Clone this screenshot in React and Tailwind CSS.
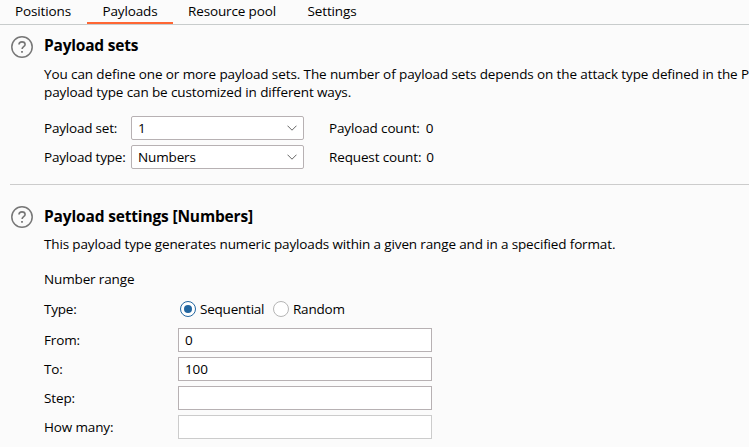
import React from "react";

function HelpIcon() {
  return (
    <svg className="mt-px h-[22px] w-[22px] shrink-0" viewBox="0 0 22 22" fill="none" stroke="#777777">
      <circle cx="11" cy="11" r="10.2" strokeWidth="1.5" />
      <path d="M8 8.6C8 7 9.3 5.9 11 5.9s3.1 1 3.1 2.6c0 2.1-3 2.3-3 4.5" strokeWidth="1.6" />
      <path d="M10.1 15.9h1.8" strokeWidth="1.8" />
    </svg>
  );
}

function Tab({ label, active, className }) {
  return (
    <div
      className={`${className} h-[24px] border-b-2 text-center leading-[23px] ${
        active ? "border-[#ff6633]" : "border-transparent"
      }`}
    >
      {label}
    </div>
  );
}

function Select({ value }) {
  return (
    <div className="flex h-6 w-[173px] items-center justify-between rounded-[2px] border border-[#b7b1b3] bg-white pr-[6px] pl-[6px]">
      <span>{value}</span>
      <svg className="h-[6px] w-[10px]" viewBox="0 0 10 6" fill="none" stroke="#666666" strokeWidth="1">
        <path d="M.5.7 5 5.2 9.5.7" />
      </svg>
    </div>
  );
}

function Radio({ checked }) {
  return (
    <span
      className={`flex h-4 w-4 shrink-0 items-center justify-center rounded-full bg-white ${
        checked ? "border-[1.5px] border-[#2266a0]" : "border border-[#b5b5b5]"
      }`}
    >
      {checked && <span className="h-2 w-2 rounded-full bg-[#2266a0]" />}
    </span>
  );
}

function Field({ label, value, disabled }) {
  return (
    <div className="flex h-6 items-center">
      <span className="w-[134px]">{label}</span>
      <div
        className={`h-6 w-[254px] border bg-white pl-[6px] leading-[22px] ${
          disabled ? "border-[#cccccc]" : "border-[#b7b1b3]"
        }`}
      >
        {value}
      </div>
    </div>
  );
}

export default function App() {
  return (
    <div className="h-[447px] w-[749px] overflow-hidden bg-[#fbfbfb] font-['Open_Sans','Noto_Sans',sans-serif] text-[13.5px] leading-[18px] tracking-[-0.14px] whitespace-nowrap text-black">
      <div className="flex h-[25px] border-b border-[#c8cccc]">
        <Tab label="Positions" className="w-[87px] pr-[1px]" />
        <Tab label="Payloads" active className="w-[86px]" />
        <Tab label="Resource pool" className="w-[118px]" />
        <Tab label="Settings" className="w-[82px]" />
      </div>

      <section className="flex h-[159px] gap-[11px] pt-[10px] pl-[11px]">
        <HelpIcon />
        <div>
          <h2 className="h-[30px] text-[15.5px] leading-[21px] font-bold tracking-[-0.21px]">Payload sets</h2>
          <p className="tracking-[-0.105px]">You can define one or more payload sets. The number of payload sets depends on the attack type defined in the Po</p>
          <p className="tracking-[-0.12px]">payload type can be customized in different ways.</p>
          <div className="mt-[15px] flex flex-col gap-[5px]">
            <div className="flex h-6 items-center">
              <span className="w-[87px] tracking-[-0.2px]">Payload set:</span>
              <Select value="1" />
              <span className="ml-[25px] flex gap-[6px]"><span>Payload count:</span><span>0</span></span>
            </div>
            <div className="flex h-6 items-center">
              <span className="w-[87px] tracking-[-0.2px]">Payload type:</span>
              <Select value="Numbers" />
              <span className="ml-[25px] flex gap-[5px]"><span>Request count:</span><span>0</span></span>
            </div>
          </div>
        </div>
      </section>

      <div className="ml-[10px] h-px bg-[#cccccc]" />

      <section className="flex gap-[11px] pt-[20px] pl-[11px]">
        <HelpIcon />
        <div>
          <h2 className="h-[30px] text-[15.5px] leading-[22px] font-bold tracking-[-0.16px]">Payload settings [Numbers]</h2>
          <p>This payload type generates numeric payloads within a given range and in a specified format.</p>
          <p className="mt-[17px]">Number range</p>
          <div className="mt-[9px] mb-[7px] flex h-6 items-center tracking-[-0.22px]">
            <span className="w-[136px]">Type:</span>
            <Radio checked />
            <span className="ml-[4px] w-[73px]">Sequential</span>
            <Radio />
            <span className="ml-[4px]">Random</span>
          </div>
          <div className="flex flex-col gap-[5px]">
            <Field label="From:" value="0" />
            <Field label="To:" value="100" />
            <Field label="Step:" />
            <Field label="How many:" disabled />
          </div>
        </div>
      </section>
    </div>
  );
}
